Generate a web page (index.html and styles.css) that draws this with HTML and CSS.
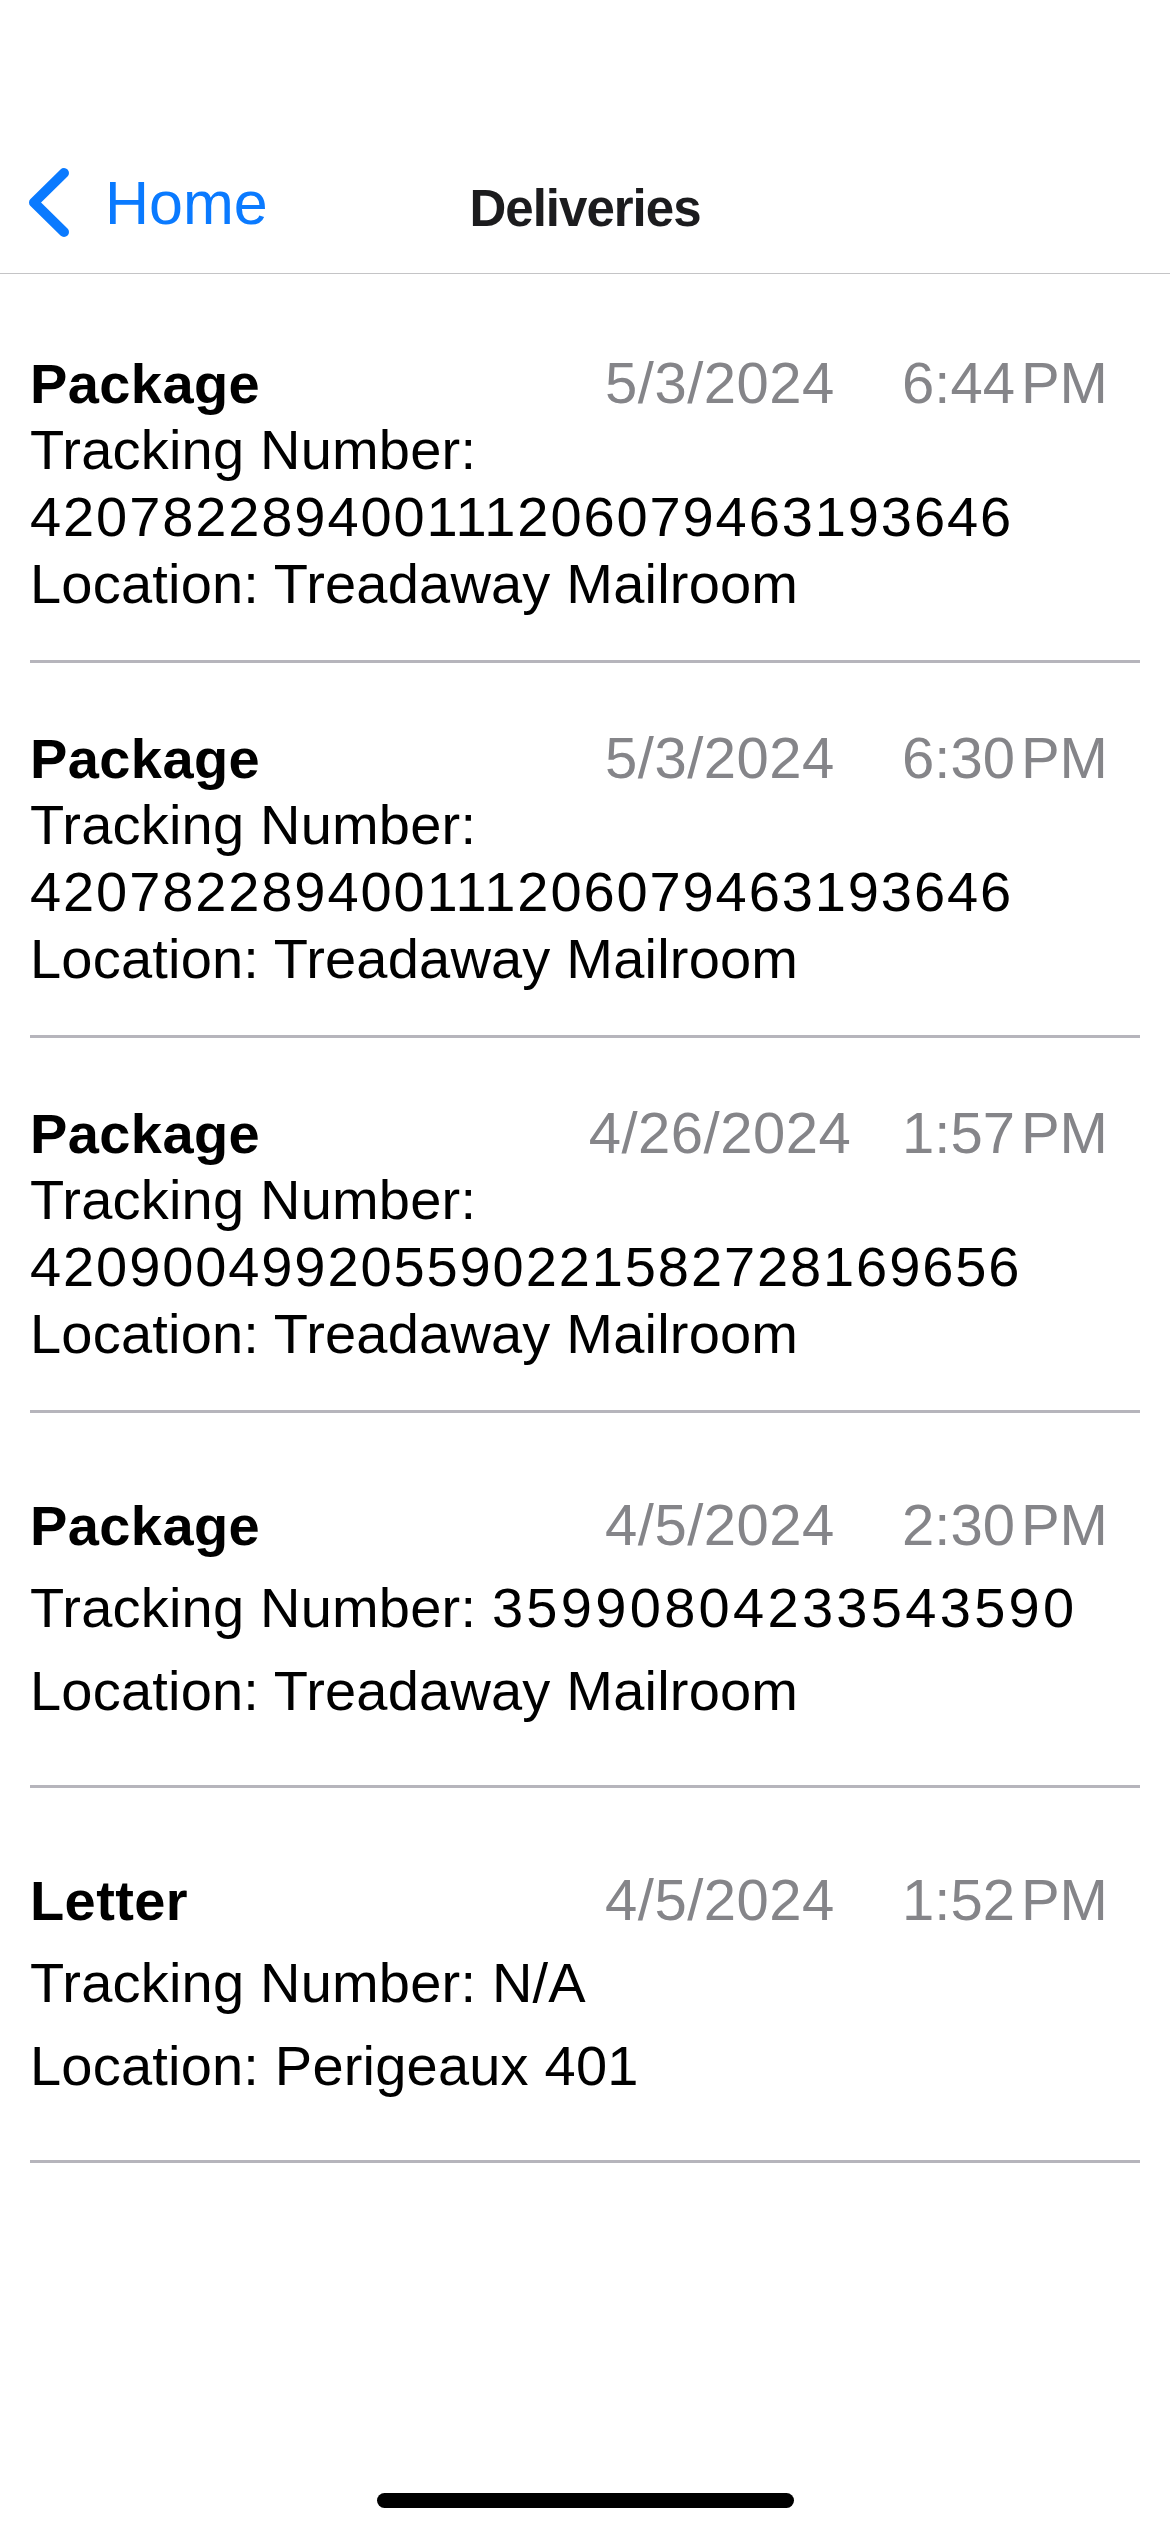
FILE: index.html
```html
<!DOCTYPE html>
<html lang="en">
<head>
<meta charset="utf-8">
<title>Deliveries</title>
<link rel="stylesheet" href="styles.css">
</head>
<body>
<div class="screen">
  <header class="header">
    <div class="status"></div>
    <nav class="navbar">
      <a class="back" href="#">
        <svg class="chevron" width="50" height="80" viewBox="0 0 50 80" aria-hidden="true">
          <polyline points="40,10 10,39.5 40,69" fill="none" stroke="#0a7aff" stroke-width="10" stroke-linecap="round" stroke-linejoin="round"/>
        </svg>
        <span class="back-label">Home</span>
      </a>
      <h1 class="title">Deliveries</h1>
      <div class="nav-right"></div>
    </nav>
  </header>

  <main class="list">
    <section class="row">
      <div class="row-head">
        <span class="kind">Package</span>
        <span class="date">5/3/2024</span>
        <span class="time">6:44<span class="ampm">PM</span></span>
      </div>
      <p class="line">Tracking Number: <span class="digits">420782289400111206079463193646</span></p>
      <p class="line">Location: Treadaway Mailroom</p>
    </section>

    <section class="row">
      <div class="row-head">
        <span class="kind">Package</span>
        <span class="date">5/3/2024</span>
        <span class="time">6:30<span class="ampm">PM</span></span>
      </div>
      <p class="line">Tracking Number: <span class="digits">420782289400111206079463193646</span></p>
      <p class="line">Location: Treadaway Mailroom</p>
    </section>

    <section class="row">
      <div class="row-head">
        <span class="kind">Package</span>
        <span class="date">4/26/2024</span>
        <span class="time">1:57<span class="ampm">PM</span></span>
      </div>
      <p class="line">Tracking Number: <span class="digits">420900499205590221582728169656</span></p>
      <p class="line">Location: Treadaway Mailroom</p>
    </section>

    <section class="row row-short">
      <div class="row-head">
        <span class="kind">Package</span>
        <span class="date">4/5/2024</span>
        <span class="time">2:30<span class="ampm">PM</span></span>
      </div>
      <p class="line">Tracking Number: <span class="digits digits-wide">35990804233543590</span></p>
      <p class="line">Location: Treadaway Mailroom</p>
    </section>

    <section class="row row-short">
      <div class="row-head">
        <span class="kind">Letter</span>
        <span class="date">4/5/2024</span>
        <span class="time">1:52<span class="ampm">PM</span></span>
      </div>
      <p class="line">Tracking Number: N/A</p>
      <p class="line">Location: Perigeaux 401</p>
    </section>
  </main>

  <div class="home-indicator"></div>
</div>
</body>
</html>
```

FILE: styles.css
```css
* {
  box-sizing: border-box;
}

html, body {
  margin: 0;
  padding: 0;
  background: #ffffff;
}

body {
  font-family: "Liberation Sans", Arial, sans-serif;
  color: #000000;
}

.screen {
  position: relative;
  width: 1170px;
  height: 2532px;
  overflow: hidden;
  background: #ffffff;
}

/* Header / navigation bar */
.header {
  height: 274px;
  border-bottom: 1px solid #c4c4c6;
}

.status {
  height: 150px;
}

.navbar {
  display: grid;
  grid-template-columns: 1fr auto 1fr;
  align-items: center;
  height: 106px;
  padding: 0 24px;
}

.back {
  display: flex;
  align-items: center;
  text-decoration: none;
  color: #0a7aff;
}

.chevron {
  display: block;
  flex: none;
  margin-right: 31px;
  margin-top: -1px;
}

.back-label {
  font-size: 61px;
  line-height: 60px;
  color: #0a7aff;
}

.title {
  margin: 0;
  padding-top: 11px;
  font-size: 51px;
  line-height: 60px;
  font-weight: 700;
  letter-spacing: -1px;
  color: #1c1c1e;
  text-align: center;
}

/* List */
.list {
  padding-top: 11px;
}

.row {
  display: flex;
  flex-direction: column;
  justify-content: center;
  height: 375px;
  margin: 0 30px;
  padding-top: 17px;
  border-bottom: 3px solid #b6b5bc;
}

.row:first-child {
  height: 378px;
  padding-top: 20px;
}

.row-short {
  gap: 16px;
}

.row-head {
  display: grid;
  grid-template-columns: 1fr 300px 230px;
  column-gap: 20px;
  padding-right: 20px;
  align-items: baseline;
  height: 67px;
}

.kind {
  font-size: 56px;
  line-height: 67px;
  font-weight: 700;
  letter-spacing: 0.4px;
}

.date,
.time {
  font-size: 58px;
  line-height: 67px;
  color: #858589;
  text-align: center;
  white-space: nowrap;
}

.date {
  letter-spacing: 0.5px;
}

.ampm {
  margin-left: 6px;
}

.line {
  margin: 0;
  font-size: 56px;
  line-height: 67px;
  letter-spacing: 0.2px;
}

.digits {
  letter-spacing: 1.9px;
}

.digits-wide {
  letter-spacing: 3.3px;
}

/* Home indicator overlay */
.home-indicator {
  position: absolute;
  left: 377px;
  bottom: 24px;
  width: 417px;
  height: 15px;
  border-radius: 8px;
  background: #000000;
}
```
